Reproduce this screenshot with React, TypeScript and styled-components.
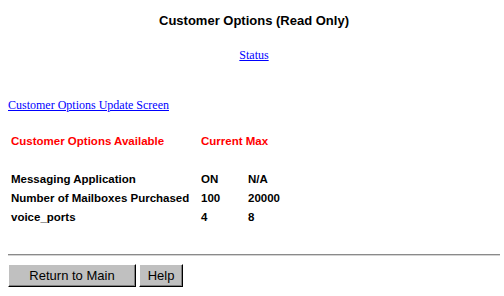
import styled, { createGlobalStyle } from "styled-components";

const GlobalStyle = createGlobalStyle`
  html, body {
    margin: 0;
    padding: 0;
    background: #ffffff;
  }
`;

const Page = styled.div`
  display: flex;
  flex-direction: column;
  padding: 0 4px 0 8px;
  width: 504px;
  box-sizing: border-box;
`;

const Title = styled.h1`
  margin: 13px 0 0;
  font-family: "Liberation Sans", Arial, sans-serif;
  font-weight: bold;
  font-size: 13px;
  line-height: 15px;
  text-align: center;
  color: #000000;
`;

const LinkRow = styled.div<{ $center?: boolean; $gap: number }>`
  margin-top: ${(p) => p.$gap}px;
  text-align: ${(p) => (p.$center ? "center" : "left")};
  line-height: 14px;
`;

const Link = styled.a`
  font-family: "Liberation Serif", "Times New Roman", serif;
  font-size: 12px;
  color: #0000ff;
  text-decoration: underline;
`;

const Options = styled.div`
  margin-top: 20px;
  display: grid;
  grid-template-columns: 190px 47px auto;
  grid-auto-rows: 19px;
  padding-left: 3px;
  font-family: "Liberation Sans", Arial, sans-serif;
  font-weight: bold;
  font-size: 11.5px;
  line-height: 19px;
`;

const Cell = styled.div<{ $head?: boolean; $span?: number }>`
  color: ${(p) => (p.$head ? "#ff0000" : "#000000")};
  grid-column: span ${(p) => p.$span ?? 1};
  white-space: nowrap;
`;

const Spacer = styled.div`
  grid-column: 1 / -1;
`;

const Rule = styled.hr`
  margin: 27px 0 0;
  height: 0;
  border: none;
  border-top: 1px solid #8a8a8a;
  border-bottom: 1px solid #d4d4d4;
`;

const Buttons = styled.div`
  display: flex;
  gap: 3px;
  margin-top: 8px;
`;

const Button = styled.button<{ $width: number }>`
  width: ${(p) => p.$width}px;
  height: 23px;
  padding: 0;
  background: #c0c0c0;
  border: 1px solid;
  border-color: #ffffff #000000 #000000 #ffffff;
  box-shadow: inset -1px -1px 0 #808080;
  font-family: "Liberation Sans", Arial, sans-serif;
  font-size: 13px;
  color: #000000;
  text-align: center;
`;

const rows = [
  ["Messaging Application", "ON", "N/A"],
  ["Number of Mailboxes Purchased", "100", "20000"],
  ["voice_ports", "4", "8"],
];

export default function App() {
  return (
    <>
      <GlobalStyle />
      <Page>
        <Title>Customer Options (Read Only)</Title>
        <LinkRow $center $gap={19}>
          <Link href="#">Status</Link>
        </LinkRow>
        <LinkRow $gap={35}>
          <Link href="#">Customer Options Update Screen</Link>
        </LinkRow>
        <Options>
          <Cell $head>Customer Options Available</Cell>
          <Cell $head $span={2}>Current Max</Cell>
          <Spacer />
          {rows.map((r) => (
            <>
              <Cell key={r[0]}>{r[0]}</Cell>
              <Cell>{r[1]}</Cell>
              <Cell>{r[2]}</Cell>
            </>
          ))}
        </Options>
        <Rule />
        <Buttons>
          <Button $width={128}>Return to Main</Button>
          <Button $width={44}>Help</Button>
        </Buttons>
      </Page>
    </>
  );
}
